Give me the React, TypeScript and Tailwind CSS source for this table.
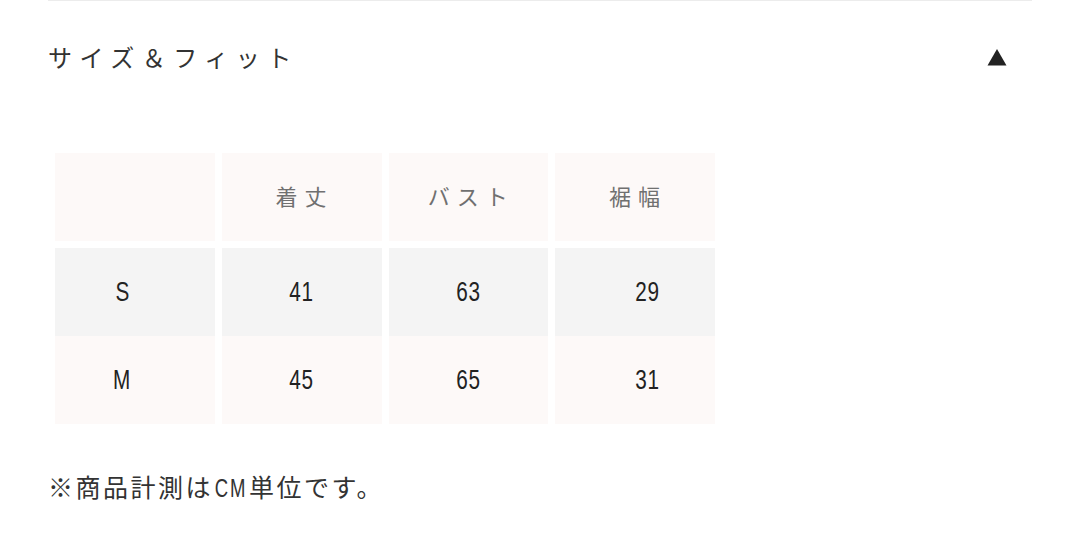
const rows = [
  { size: 'S', values: ['41', '63', '29'], bg: 'bg-[#f4f4f4]' },
  { size: 'M', values: ['45', '65', '31'], bg: 'bg-[#fdf9f8]' },
];

const headers = ['着丈', 'バスト', '裾幅'];

// condensed latin glyphs (no narrow font installed)
function Narrow({ children }: { children: string }) {
  return <span className="inline-block scale-x-[0.74] font-['Liberation_Sans',sans-serif]">{children}</span>;
}

export default function App() {
  return (
    <div className="min-h-[548px] w-[1080px] bg-white font-['Noto_Sans_CJK_JP',sans-serif]">
      <div className="mx-[48px] border-t border-[#ececec]">
        {/* accordion header */}
        <div className="flex items-center justify-between pt-[40px]">
          <h2 className="text-[24px] leading-[32px] tracking-[7.5px] text-[#333]">サイズ＆フィット</h2>
          <svg width="20" height="18" viewBox="0 0 20 18" className="mr-[25px]">
            <path d="M10 1 L19.5 17.5 L0.5 17.5 Z" fill="#222" />
          </svg>
        </div>

        {/* size table */}
        <div className="ml-[7px] mt-[80px] w-[660px]">
          <div className="grid grid-cols-4 gap-x-[7px]">
            <div className="h-[88px] bg-[#fdf9f8]" />
            {headers.map((h) => (
              <div
                key={h}
                className="flex h-[88px] items-center justify-center bg-[#fdf9f8] pb-[4px] pl-[6px] text-[22px] tracking-[7px] text-[#707070]"
              >
                {h}
              </div>
            ))}
          </div>
          <div className="mt-[7px]">
            {rows.map((r) => (
              <div key={r.size} className="grid grid-cols-4 gap-x-[7px]">
                <div className={`flex h-[88px] items-center justify-center pr-[26px] text-[28px] text-[#222] ${r.bg}`}>
                  <Narrow>{r.size}</Narrow>
                </div>
                {r.values.map((v, i) => (
                  <div
                    key={i}
                    className={`flex h-[88px] items-center justify-center text-[28px] tracking-[1px] text-[#222] ${r.bg} ${
                      i === 2 ? 'pl-[24px]' : ''
                    }`}
                  >
                    <Narrow>{v}</Narrow>
                  </div>
                ))}
              </div>
            ))}
          </div>
        </div>

        {/* note */}
        <p className="mt-[46px] text-[25px] leading-[32px] tracking-[2.5px] text-[#333]">
          ※商品計測は<span className="-mx-[4px]"><Narrow>CM</Narrow></span>単位です。
        </p>
      </div>
    </div>
  );
}
